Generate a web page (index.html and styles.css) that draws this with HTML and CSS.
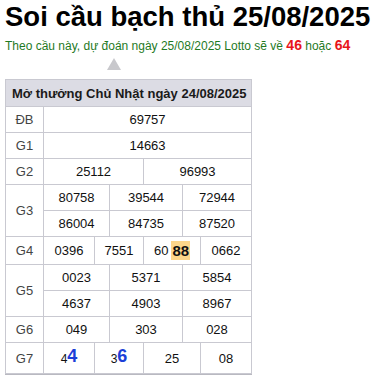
FILE: index.html
```html
<!DOCTYPE html>
<html lang="vi">
<head>
<meta charset="utf-8">
<link rel="stylesheet" href="styles.css">
</head>
<body>
<h1 class="title">Soi cầu bạch thủ 25/08/2025</h1>
<p class="lead">Theo cầu này, dự đoán ngày 25/08/2025 Lotto sẽ về <b class="hot">46</b> hoặc <b class="hot">64</b></p>
<div class="arrow"></div>
<div class="board">
  <div class="head">Mở thưởng Chủ Nhật ngày 24/08/2025</div>

  <div class="lbl">ĐB</div>
  <div class="c s-full">69757</div>

  <div class="lbl">G1</div>
  <div class="c s-full">14663</div>

  <div class="lbl">G2</div>
  <div class="c s-h1">25112</div>
  <div class="c s-h2">96993</div>

  <div class="lbl r2">G3</div>
  <div class="c s-t1">80758</div>
  <div class="c s-t2">39544</div>
  <div class="c s-t3">72944</div>
  <div class="c s-t1">86004</div>
  <div class="c s-t2">84735</div>
  <div class="c s-t3">87520</div>

  <div class="lbl tall">G4</div>
  <div class="c s-q1 tall">0396</div>
  <div class="c s-q2 tall">7551</div>
  <div class="c s-q3 tall">60 <b class="mark">88</b></div>
  <div class="c s-q4 tall">0662</div>

  <div class="lbl r2">G5</div>
  <div class="c s-t1">0023</div>
  <div class="c s-t2">5371</div>
  <div class="c s-t3">5854</div>
  <div class="c s-t1">4637</div>
  <div class="c s-t2">4903</div>
  <div class="c s-t3">8967</div>

  <div class="lbl">G6</div>
  <div class="c s-t1">049</div>
  <div class="c s-t2">303</div>
  <div class="c s-t3">028</div>

  <div class="lbl last">G7</div>
  <div class="c s-q1 last"><span class="sm">4</span><b class="blue">4</b></div>
  <div class="c s-q2 last"><span class="sm">3</span><b class="blue">6</b></div>
  <div class="c s-q3 last">25</div>
  <div class="c s-q4 last">08</div>
</div>
</body>
</html>
```
FILE: styles.css
```css
html, body {
  margin: 0;
  padding: 0;
  background: #fff;
}
body {
  padding: 0 5px;
  font-family: "Liberation Sans", Arial, sans-serif;
  color: #111;
}
.title {
  margin: 0;
  font-size: 27.5px;
  line-height: 34px;
  font-weight: bold;
  color: #000;
  white-space: nowrap;
}
.lead {
  margin: 2px 0 0;
  font-size: 12px;
  line-height: 20px;
  color: #1f7a1f;
  white-space: nowrap;
}
.hot {
  color: #e8141b;
  font-size: 14px;
  line-height: 14px;
}
.arrow {
  margin: 2px 0 0 102px;
  width: 0;
  height: 0;
  border-left: 7px solid transparent;
  border-right: 7px solid transparent;
  border-bottom: 12px solid #c8c8cc;
}
.board {
  margin-top: 9px;
  width: fit-content;
  display: grid;
  grid-template-columns: 37px 50px 14px 33px 38px 17px 50px;
  gap: 1px;
  padding: 1px 1px 1px 1px;
  background: #c9c9d1;
  border-bottom: 1px solid #b9b9c1;
  font-size: 13px;
}
.head {
  grid-column: 1 / -1;
  height: 26px;
  background: #dcdce4;
  font-weight: bold;
  color: #1a1a1a;
  display: flex;
  align-items: center;
  padding-left: 6px;
  font-size: 13px;
  white-space: nowrap;
}
.lbl, .c {
  background: #fff;
  height: 25px;
  display: flex;
  align-items: center;
  justify-content: center;
}
.lbl {
  color: #444;
  grid-column: 1;
}
.r2 { grid-row: span 2; height: auto; }
.tall { height: 27px; }
.last { height: 30px; }
.s-full { grid-column: 2 / 8; }
.s-h1 { grid-column: 2 / 5; }
.s-h2 { grid-column: 5 / 8; }
.s-t1 { grid-column: 2 / 4; }
.s-t2 { grid-column: 4 / 6; }
.s-t3 { grid-column: 6 / 8; }
.s-q1 { grid-column: 2 / 3; }
.s-q2 { grid-column: 3 / 5; }
.s-q3 { grid-column: 5 / 7; }
.s-q4 { grid-column: 7 / 8; }
.mark {
  background: #fdd68a;
  font-size: 15px;
  padding: 0 1px;
  line-height: 19px;
  margin-left: 3px;
}
.sm {
  font-size: 12px;
  align-self: flex-end;
  margin-bottom: 7px;
}
.blue {
  color: #1c3fd8;
  font-size: 18px;
  align-self: flex-end;
  margin-bottom: 6px;
}
```
